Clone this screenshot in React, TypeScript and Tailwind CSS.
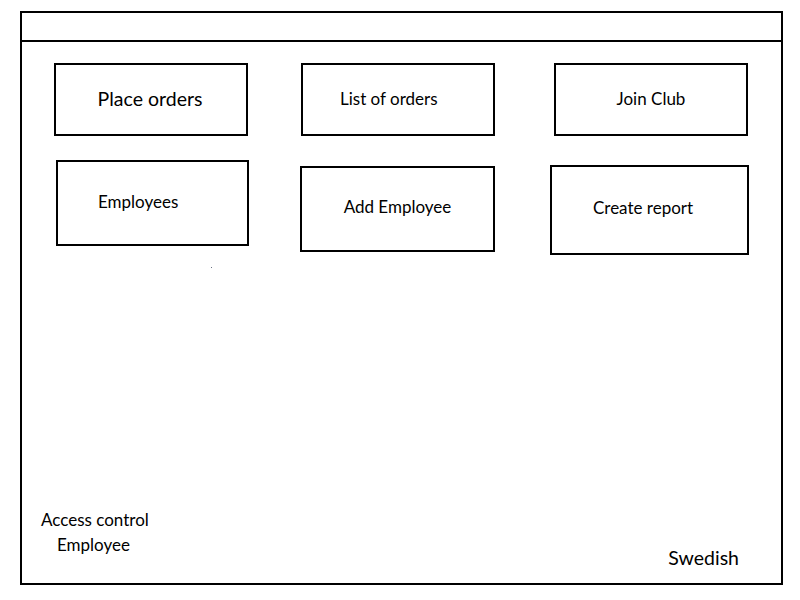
const font = { fontFamily: 'Lato, "Open Sans", sans-serif' }

const Tile = ({
  label,
  className,
  textClass = 'text-[17px]',
}: {
  label: string
  className: string
  textClass?: string
}) => (
  <div className={`flex shrink-0 items-center border-2 border-black ${className}`}>
    <span className={`whitespace-nowrap text-black ${textClass}`}>{label}</span>
  </div>
)

export default function App() {
  return (
    <div className="h-[600px] w-[800px] bg-white pt-[11px] pl-[20px]" style={font}>
      <div className="flex h-[574px] w-[763px] flex-col border-2 border-black">
        <div className="h-[29px] shrink-0 border-b-2 border-black" />

        <div className="mt-[21px] flex items-start">
          <Tile
            label="Place orders"
            className="ml-[32px] h-[73px] w-[194px] justify-center pr-[2px] pb-[2px]"
            textClass="text-[19.5px]"
          />
          <Tile label="List of orders" className="ml-[53px] h-[73px] w-[194px] pl-[37px] pb-[1px]" />
          <Tile label="Join Club" className="ml-[59px] h-[73px] w-[194px] justify-center pb-[1px]" />
        </div>

        <div className="mt-[24px] flex items-start">
          <Tile label="Employees" className="ml-[34px] h-[86px] w-[193px] pl-[40px] pb-[2px]" />
          <Tile
            label="Add Employee"
            className="mt-[6px] ml-[51px] h-[86px] w-[195px] justify-center pb-[4px]"
          />
          <Tile
            label="Create report"
            className="mt-[5px] ml-[55px] h-[90px] w-[199px] pl-[41px] pb-[4px]"
          />
        </div>

        <div className="mt-[12px] ml-[189px] h-px w-px bg-gray-500" />

        <div className="mt-auto flex items-start justify-between pb-[13px]">
          <div className="pl-[19px] text-[17px] leading-[25px] text-black">
            <div>Access control</div>
            <div className="pl-[16px]">Employee</div>
          </div>
          <div className="mt-[38px] pr-[42px] text-[19.5px] leading-[25px] text-black">Swedish</div>
        </div>
      </div>
    </div>
  )
}
